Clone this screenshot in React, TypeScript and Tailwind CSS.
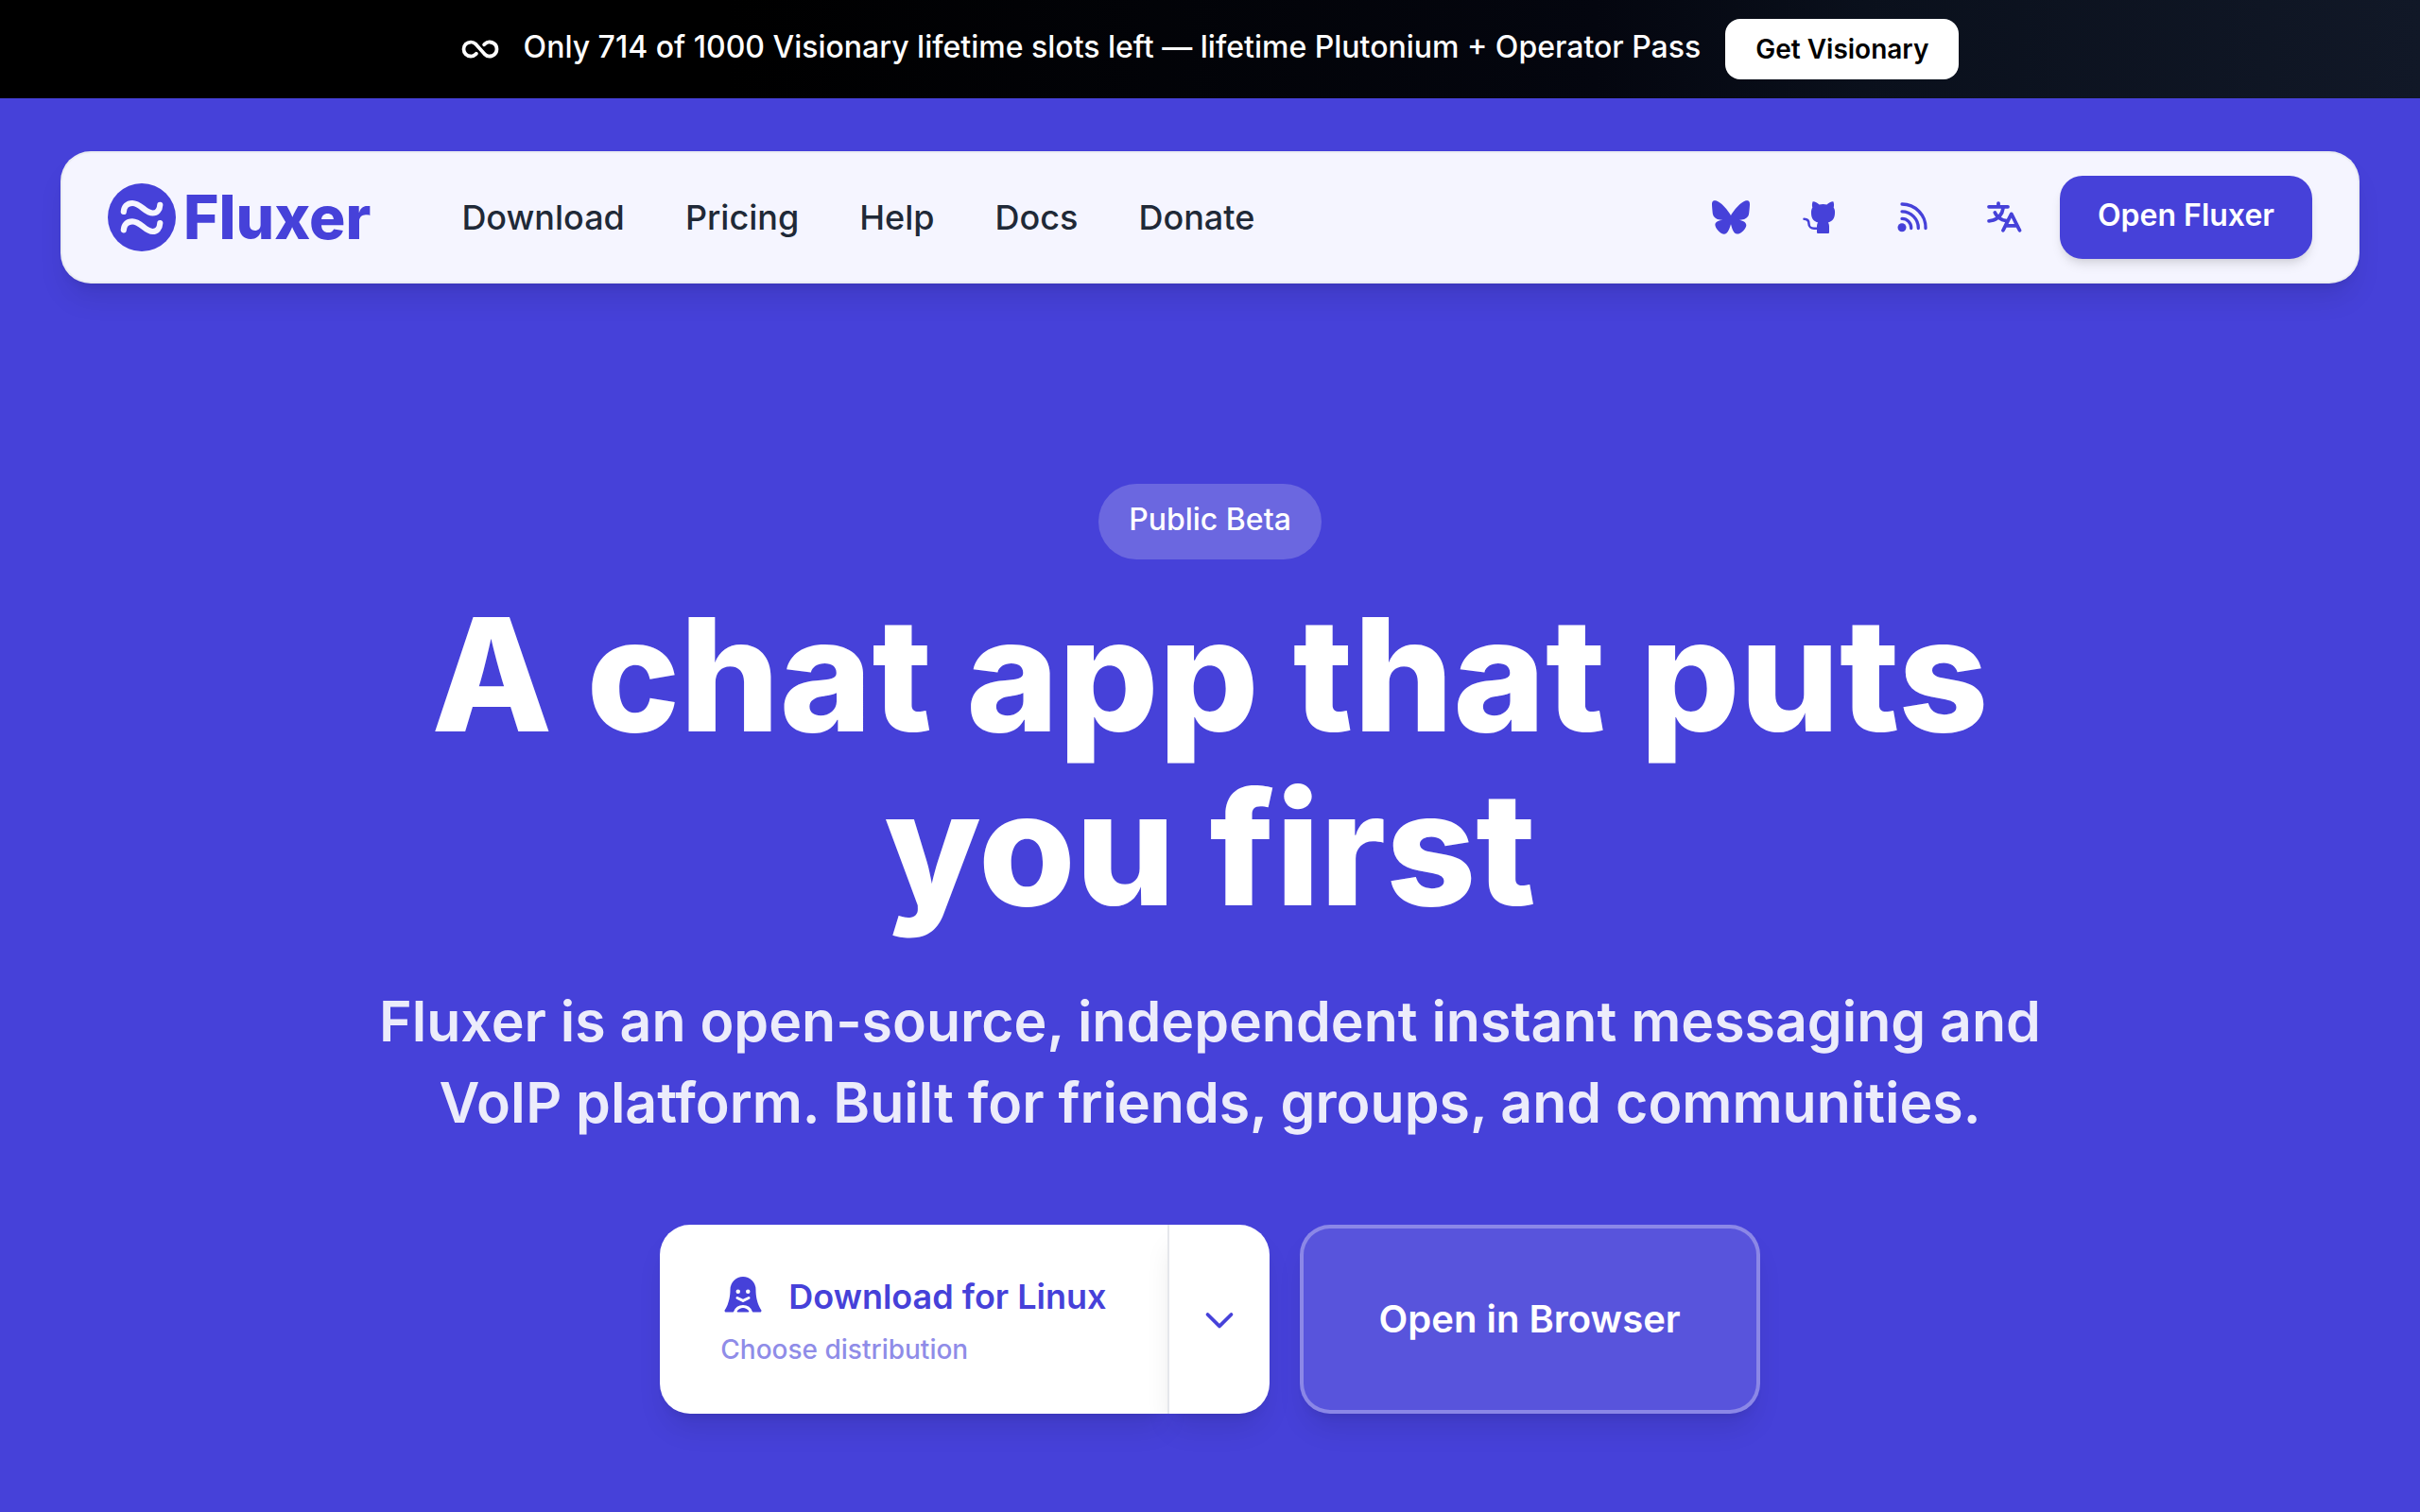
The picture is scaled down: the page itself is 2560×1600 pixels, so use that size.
import { FaBluesky } from 'react-icons/fa6';
import { PiInfinityBold, PiTranslateBold, PiLinuxLogoFill, PiCaretDownBold } from 'react-icons/pi';

const NAV_LINKS = ['Download', 'Pricing', 'Help', 'Docs', 'Donate'];

function LogoMark() {
  return (
    <svg viewBox="0 0 72 72" className="size-18" aria-hidden="true">
      <circle cx="36" cy="36" r="36" fill="#4641d9" />
      <g fill="none" stroke="#f5f5ff" strokeWidth="6.2" strokeLinecap="round">
        <path d="M16.800 30C17.200 24.500 20.500 21 26 21C35 21 39.500 31.500 47.500 31.500C52 31.500 55 28.300 55.300 22.800" />
        <path d="M16.800 49.300C17.200 43.800 20.500 40.400 26 40.400C35 40.400 39.500 51 47.500 51C52 51 55 47.700 55.300 42.200" />
      </g>
    </svg>
  );
}

function CatIcon() {
  return (
    <svg viewBox="0 0 40 34" className="h-[34px] w-10" aria-hidden="true">
      <path
        fill="currentColor"
        d="M10.700 0.300C13 0.200 15.500 1.500 17.500 3.500Q21.500 2.700 25.500 3.500C27.500 1.500 30 0.200 32.300 0.300C33.200 2.500 33.300 4.500 32.700 6.600C33.900 8.500 34.200 10.500 34 13C33.700 18.500 31 21.500 26.800 22.400C27.600 23.500 28 24.800 28 26.500V33Q28 34 27 34H16Q15 34 15 33V26.500C15 24.800 15.400 23.500 16.200 22.400C12 21.500 9.200 18.500 9 13C8.900 10.500 9.200 8.500 10.300 6.600C9.700 4.500 9.800 2.500 10.700 0.300Z"
      />
      <path
        d="M1.500 18.800C4.800 18.800 6.500 20.500 6.500 23.700C6.500 26.800 9 28.800 12 28.800H16"
        fill="none"
        stroke="currentColor"
        strokeWidth="2.500"
        strokeLinecap="round"
      />
    </svg>
  );
}

function RssIcon() {
  return (
    <svg viewBox="0 0 32 32" className="mx-1 size-8" aria-hidden="true">
      <circle cx="5" cy="26.800" r="4.500" fill="currentColor" />
      <path
        d="M5 2A25 25 0 0 1 30 27.500M5 9.800A17.400 17.400 0 0 1 22.300 27.500M5 17.400A9.700 9.700 0 0 1 14.700 27.500"
        fill="none"
        stroke="currentColor"
        strokeWidth="3.300"
        strokeLinecap="round"
      />
    </svg>
  );
}

function PromoBar() {
  return (
    <div className="flex h-26 items-center justify-center gap-[26px] bg-[linear-gradient(90deg,#000_30%,#04060f_66%,#0a101c_77%,#111827)] text-white">
      <PiInfinityBold className="size-10" aria-hidden="true" />
      <p className="pb-1 text-[32px] leading-12 font-medium">
        Only 714 of 1000 Visionary lifetime slots left — lifetime Plutonium + Operator Pass
      </p>
      <a href="#visionary" className="rounded-2xl bg-white px-8 py-3 text-[28px] leading-10 font-semibold text-black">
        Get Visionary
      </a>
    </div>
  );
}

function Header() {
  return (
    <header className="mx-16 mt-14 flex items-center rounded-4xl border-2 border-gray-200/60 bg-[#f5f5ff] px-12 py-6 shadow-[0_20px_30px_-6px_rgb(0_0_0/0.1),0_8px_12px_-8px_rgb(0_0_0/0.1)]">
      <a href="#home" className="flex items-center gap-2 text-[64px] leading-18 font-extrabold text-[#4641d9]">
        <LogoMark />
        Fluxer
      </a>
      <nav className="ml-24 flex gap-16 text-[36px] leading-14 font-medium text-[#1f2937]">
        {NAV_LINKS.map((label) => (
          <a key={label} href={`#${label.toLowerCase()}`}>
            {label}
          </a>
        ))}
      </nav>
      <div className="ml-auto flex items-center gap-14 text-[#4641d9]">
        <a href="#bluesky" aria-label="Bluesky">
          <FaBluesky className="size-10" />
        </a>
        <a href="#github" aria-label="GitHub">
          <CatIcon />
        </a>
        <a href="#rss" aria-label="RSS feed">
          <RssIcon />
        </a>
        <button type="button" aria-label="Change language">
          <PiTranslateBold className="size-10" />
        </button>
      </div>
      <a
        href="#app"
        className="ml-10 flex h-22 items-center rounded-3xl bg-[#4641d9] px-10 pb-1 text-[32px] leading-12 font-semibold text-white shadow-[0_8px_12px_-2px_rgb(0_0_0/0.1),0_4px_8px_-4px_rgb(0_0_0/0.1)]"
      >
        Open Fluxer
      </a>
    </header>
  );
}

function DownloadButton() {
  return (
    <div className="flex h-50 text-[#4641d9]">
      <a
        href="#linux"
        className="flex flex-col items-start justify-center gap-2 rounded-l-4xl bg-white px-16 shadow-[0_20px_30px_-6px_rgb(0_0_0/0.1),0_8px_12px_-8px_rgb(0_0_0/0.1)]"
      >
        <span className="flex items-center gap-6 text-[36px] leading-14 font-semibold">
          <PiLinuxLogoFill className="size-12" aria-hidden="true" />
          Download for Linux
        </span>
        <span className="text-[28px] leading-10 font-medium opacity-60">Choose distribution</span>
      </a>
      <button
        type="button"
        aria-label="Show download options"
        className="flex w-27 items-center justify-center rounded-r-4xl border-l-2 border-gray-200 bg-white shadow-[0_20px_30px_-6px_rgb(0_0_0/0.1),0_8px_12px_-8px_rgb(0_0_0/0.1)]"
      >
        <PiCaretDownBold className="size-10" />
      </button>
    </div>
  );
}

export default function App() {
  return (
    <div className="min-h-screen overflow-hidden bg-[#4641d9] font-['Inter','Liberation_Sans',sans-serif]">
      <PromoBar />
      <Header />
      <main className="flex flex-col items-center pt-53 text-center text-white">
        <span className="flex h-20 items-center rounded-full bg-white/20 px-8 pb-1 text-[32px] leading-12 font-medium">
          Public Beta
        </span>
        <h1 className="mt-[30px] max-w-[1792px] text-[166px] leading-46 font-extrabold">
          A chat app that puts
          <br />
          you first
        </h1>
        <p className="mt-12 max-w-[1792px] text-[59px] leading-[86px] font-semibold text-white/90">
          Fluxer is an open-source, independent instant messaging and
          <br />
          VoIP platform. Built for friends, groups, and communities.
        </p>
        <div className="mt-[86px] flex gap-8">
          <DownloadButton />
          <a
            href="#browser"
            className="flex h-50 items-center rounded-4xl border-4 border-white/30 bg-white/10 px-20 text-[40px] leading-14 font-semibold shadow-[0_20px_30px_-6px_rgb(0_0_0/0.1),0_8px_12px_-8px_rgb(0_0_0/0.1)]"
          >
            Open in Browser
          </a>
        </div>
      </main>
    </div>
  );
}
